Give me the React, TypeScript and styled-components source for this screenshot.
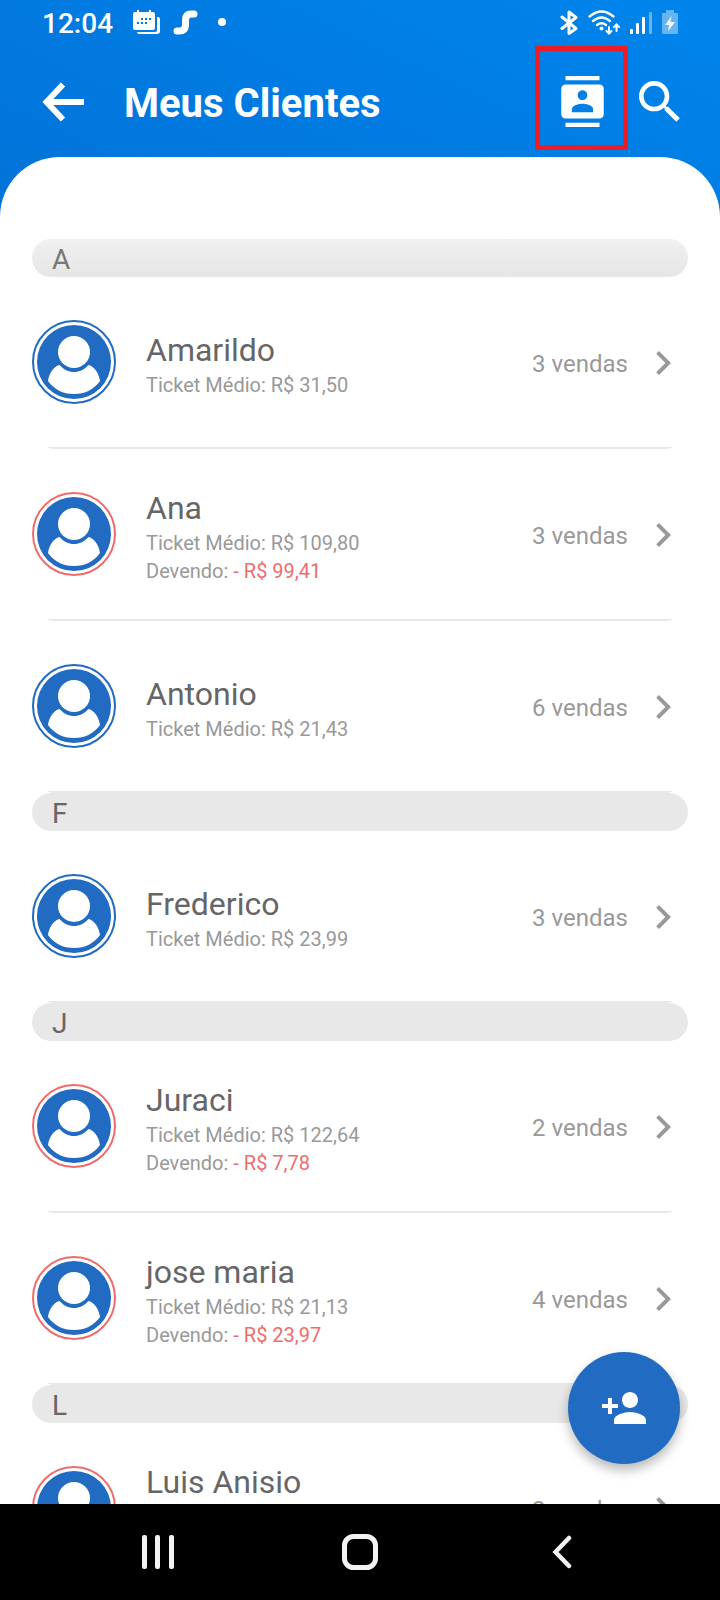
import React from "react";
import styled, { createGlobalStyle } from "styled-components";
import { MdChevronRight, MdContacts, MdSearch, MdPersonAdd } from "react-icons/md";

const blue = "#226bc2";
const coral = "#ef6c6c";

const GlobalStyle = createGlobalStyle`
  *, *::before, *::after { box-sizing: border-box; }
  body {
    margin: 0;
    background: #fff;
    font-family: Roboto, "Liberation Sans", sans-serif;
  }
  button { font: inherit; border: 0; padding: 0; background: none; color: inherit; cursor: pointer; }
`;

const Shell = styled.div`
  height: 100vh;
  display: flex;
  flex-direction: column;
  background: linear-gradient(25deg, #0272d8, #0085ec) no-repeat top / 100% 217px;
`;

const StatusBar = styled.div`
  flex: none;
  display: flex;
  align-items: center;
  justify-content: space-between;
  height: 46px;
  padding: 0 42px;
  color: #fff;
`;

const StatusGroup = styled.div<{ $gap: number }>`
  display: flex;
  align-items: center;
  gap: ${(p) => p.$gap}px;
  svg { display: block; }
`;

const Clock = styled.span`
  padding-top: 2px;
  font-size: 28px;
  line-height: 44px;
  font-weight: 500;
  margin-right: 8px;
`;

const TopBar = styled.header`
  flex: none;
  display: flex;
  align-items: center;
  height: 111px;
  padding: 0 32px 0 42px;
  color: #fff;
`;

const Title = styled.h1`
  flex: 1;
  margin: 0;
  padding-top: 4px;
  font-size: 40px;
  line-height: 48px;
  font-weight: 700;
`;

const BackButton = styled.button`
  width: 82px;
  svg { display: block; }
`;

const IconButton = styled.button<{ $outlined?: boolean }>`
  display: flex;
  align-items: center;
  justify-content: center;
  ${(p) =>
    p.$outlined &&
    `
    align-self: flex-start;
    width: 93px;
    height: 104px;
    margin-right: 4px;
    padding: 6px 0 0 2px;
    border: 5px solid #ed1c24;
  `}
`;

const Content = styled.main`
  position: relative;
  flex: 1;
  min-height: 0;
`;

const Sheet = styled.div`
  height: 100%;
  overflow-y: auto;
  scrollbar-width: none;
  padding: 82px 32px 0;
  background: #fff;
  border-radius: 60px 60px 0 0;
`;

const SectionTitle = styled.h2<{ $faded: boolean }>`
  height: 38px;
  margin: 0;
  padding: 2px 20px 0;
  border-radius: 19px;
  background: ${(p) => (p.$faded ? "linear-gradient(#f0f0f0, #e6e6e6)" : "#e8e8e8")};
  color: ${(p) => (p.$faded ? "#777" : "#666")};
  font-size: 28px;
  line-height: 38px;
  font-weight: 400;
`;

const List = styled.ul`
  margin: 0;
  padding: 0;
  list-style: none;
`;

const Item = styled.li`
  display: flex;
  flex-direction: column;
  height: 172px;

  &::after {
    content: "";
    height: 2px;
    margin: 0 15px;
    border-radius: 0 0 10px 10px / 0 0 2px 2px;
    background: #e8e8e8;
  }
`;

const ClientButton = styled.button`
  flex: 1;
  display: flex;
  align-items: center;
  width: 100%;
  text-align: left;
  color: #999;
`;

const Avatar = styled.svg`
  flex: none;
  width: 84px;
  height: 84px;
  margin-right: 30px;
`;

const Info = styled.span<{ $owing: boolean }>`
  flex: 1;
  display: flex;
  flex-direction: column;
  min-height: ${(p) => (p.$owing ? 102 : 74)}px;
  padding-top: 4px;
`;

const Name = styled.span`
  font-size: 32px;
  line-height: 42px;
  color: #666;
`;

const Detail = styled.span`
  font-size: 20px;
  line-height: 28px;
`;

const Debt = styled.span`
  color: ${coral};
`;

const Sales = styled.span`
  display: flex;
  align-items: center;
  padding-top: 2px;
  font-size: 24px;
  line-height: 28px;
  svg { margin: 0 1px 0 11px; }
`;

const SalesCount = styled.span`
  padding-top: 2px;
`;

const AddButton = styled.button`
  position: absolute;
  right: 40px;
  bottom: 40px;
  width: 112px;
  height: 112px;
  display: flex;
  align-items: center;
  justify-content: center;
  border-radius: 50%;
  background: ${blue};
  color: #fff;
  box-shadow: 0 6px 12px rgba(0, 0, 0, 0.28);
`;

const NavBar = styled.nav`
  flex: none;
  display: grid;
  grid-template-columns: repeat(3, 1fr);
  height: 96px;
  padding: 0 8%;
  background: #000;
`;

const NavButton = styled.button`
  display: flex;
  align-items: center;
  justify-content: center;
`;

type Client = { name: string; ticket?: string; debt?: string; owing?: boolean; sales: number };

const sections: { letter: string; clients: Client[] }[] = [
  {
    letter: "A",
    clients: [
      { name: "Amarildo", ticket: "31,50", sales: 3 },
      { name: "Ana", ticket: "109,80", debt: "99,41", owing: true, sales: 3 },
      { name: "Antonio", ticket: "21,43", sales: 6 },
    ],
  },
  { letter: "F", clients: [{ name: "Frederico", ticket: "23,99", sales: 3 }] },
  {
    letter: "J",
    clients: [
      { name: "Juraci", ticket: "122,64", debt: "7,78", owing: true, sales: 2 },
      { name: "jose maria", ticket: "21,13", debt: "23,97", owing: true, sales: 4 },
    ],
  },
  { letter: "L", clients: [{ name: "Luis Anisio", owing: true, sales: 2 }] },
];

function ClientAvatar({ owing }: { owing: boolean }) {
  return (
    <Avatar viewBox="0 0 84 84" aria-hidden="true">
      <circle cx="42" cy="42" r="41" fill="#fff" stroke={owing ? coral : blue} strokeWidth="2" />
      <circle cx="42" cy="42" r="37" fill={blue} />
      <path
        fill="#fff"
        d="M27.5 45C21 46.500 17 54 16 61C22 69.500 31 74 42 74S62 69.500 68 61C67 54 63 46.500 56.500 45C52.500 49.500 47.500 52 42 52S31.500 49.500 27.500 45Z"
      />
      <circle cx="42" cy="32" r="16" fill="#fff" />
    </Avatar>
  );
}

function ClientRow({ client }: { client: Client }) {
  const owing = Boolean(client.owing);
  return (
    <Item>
      <ClientButton type="button">
        <ClientAvatar owing={owing} />
        <Info $owing={owing}>
          <Name>{client.name}</Name>
          {client.ticket && <Detail>Ticket Médio: R$ {client.ticket}</Detail>}
          {client.debt && (
            <Detail>
              Devendo: <Debt>- R$ {client.debt}</Debt>
            </Detail>
          )}
        </Info>
        <Sales>
          <SalesCount>{client.sales} vendas</SalesCount>
          <MdChevronRight size={48} aria-hidden="true" />
        </Sales>
      </ClientButton>
    </Item>
  );
}

function CalendarIcon() {
  return (
    <svg width="28" height="26" viewBox="0 0 28 26" fill="currentColor" aria-hidden="true">
      <path
        fillRule="evenodd"
        d="M2 2H4V0H6V2H16V0H18V2H20Q22 2 22 4V18Q22 20 20 20H2Q0 20 0 18V4Q0 2 2 2ZM8 8V10H10V8ZM12 8V10H14V8ZM16 8V10H18V8ZM4 12V14H6V12ZM8 12V14H10V12ZM12 12V14H14V12Z"
      />
      <path d="M24 7H25Q27 7 27 9V21Q27 24 24 24H6Q4 24 4 22H22Q24 22 24 20Z" />
    </svg>
  );
}

function SIcon() {
  return (
    <svg width="26" height="26" viewBox="0 0 26 26" fill="none" aria-hidden="true">
      <path d="M21 4H18Q12.500 4 12.500 10V15Q12.500 21 6 21H4" stroke="currentColor" strokeWidth="7" strokeLinecap="round" />
    </svg>
  );
}

function BluetoothIcon() {
  return (
    <svg width="18" height="26" viewBox="0 0 18 26" fill="none" stroke="currentColor" strokeWidth="3" strokeLinecap="round" strokeLinejoin="round" aria-hidden="true">
      <path d="M2 7L16 18.500L9 23.500V2L16 7.500L2 18.500" />
    </svg>
  );
}

function WifiIcon() {
  return (
    <svg width="32" height="26" viewBox="0 0 32 26" fill="none" stroke="currentColor" strokeWidth="2.300" strokeLinecap="round" aria-hidden="true">
      <path d="M1.500 6.500Q13.500 -3.500 25.500 6.500M5 11Q13.500 4 22 11M9 15Q13.500 11.500 18 15" />
      <circle cx="13.500" cy="18.500" r="2" fill="currentColor" stroke="none" />
      <path d="M21 17V23M18.500 21L21 23.500L23.500 21M28.500 21V15M26 17L28.500 14.500L31 17" strokeWidth="2" />
    </svg>
  );
}

function SignalIcon() {
  return (
    <svg width="22" height="26" viewBox="0 0 22 26" fill="currentColor" aria-hidden="true">
      <rect x="0" y="19" width="3" height="5" rx="1" />
      <rect x="6" y="13" width="3" height="11" rx="1" />
      <rect x="12" y="7" width="3" height="17" rx="1" />
      <rect x="19" y="2" width="3" height="22" rx="1" opacity="0.400" />
    </svg>
  );
}

function BatteryIcon() {
  return (
    <svg width="16" height="26" viewBox="0 0 16 26" fill="currentColor" aria-hidden="true">
      <path d="M4 0H12V3H15Q16 3 16 4V23Q16 24 15 24H1Q0 24 0 23V4Q0 3 1 3H4Z" opacity="0.400" />
      <path d="M9.500 6L3 15H7L6 21.500L13 12H8.500Z" opacity="0.850" />
    </svg>
  );
}

export default function App() {
  return (
    <>
      <GlobalStyle />
      <Shell>
        <StatusBar>
          <StatusGroup $gap={12}>
            <Clock>12:04</Clock>
            <CalendarIcon />
            <SIcon />
            <svg width="32" height="26" viewBox="0 0 32 26" aria-hidden="true">
              <circle cx="11" cy="12" r="4" fill="currentColor" />
            </svg>
          </StatusGroup>
          <StatusGroup $gap={10}>
            <BluetoothIcon />
            <WifiIcon />
            <SignalIcon />
            <BatteryIcon />
          </StatusGroup>
        </StatusBar>
        <TopBar>
          <BackButton type="button" aria-label="Voltar">
            <svg width="42" height="40" viewBox="0 0 42 40" fill="none" stroke="currentColor" strokeWidth="6" aria-hidden="true">
              <path d="M21 2.500L4.500 20L21 37.500M4 20H42" />
            </svg>
          </BackButton>
          <Title>Meus Clientes</Title>
          <IconButton type="button" aria-label="Importar contatos" $outlined>
            <MdContacts size={51} />
          </IconButton>
          <IconButton type="button" aria-label="Buscar">
            <MdSearch size={56} />
          </IconButton>
        </TopBar>
        <Content>
          <Sheet>
            {sections.map((section, index) => (
              <section key={section.letter}>
                <SectionTitle $faded={index === 0}>{section.letter}</SectionTitle>
                <List>
                  {section.clients.map((client) => (
                    <ClientRow key={client.name} client={client} />
                  ))}
                </List>
              </section>
            ))}
          </Sheet>
          <AddButton type="button" aria-label="Adicionar cliente">
            <MdPersonAdd size={48} />
          </AddButton>
        </Content>
        <NavBar aria-label="Sistema">
          <NavButton type="button" aria-label="Recentes">
            <svg width="32" height="34" viewBox="0 0 32 34" fill="#f2f2f2" aria-hidden="true">
              <rect x="0" width="5" height="34" rx="2" />
              <rect x="13" width="5" height="34" rx="2" />
              <rect x="27" width="5" height="34" rx="2" />
            </svg>
          </NavButton>
          <NavButton type="button" aria-label="Início">
            <svg width="36" height="36" viewBox="0 0 36 36" fill="none" stroke="#f2f2f2" strokeWidth="5" aria-hidden="true">
              <rect x="2.500" y="2.500" width="31" height="31" rx="9" />
            </svg>
          </NavButton>
          <NavButton type="button" aria-label="Voltar">
            <svg width="20" height="34" viewBox="0 0 20 34" fill="none" stroke="#f2f2f2" strokeWidth="4.500" strokeLinecap="round" strokeLinejoin="miter" aria-hidden="true">
              <path d="M17 3L3.500 17L17 31" />
            </svg>
          </NavButton>
        </NavBar>
      </Shell>
    </>
  );
}
